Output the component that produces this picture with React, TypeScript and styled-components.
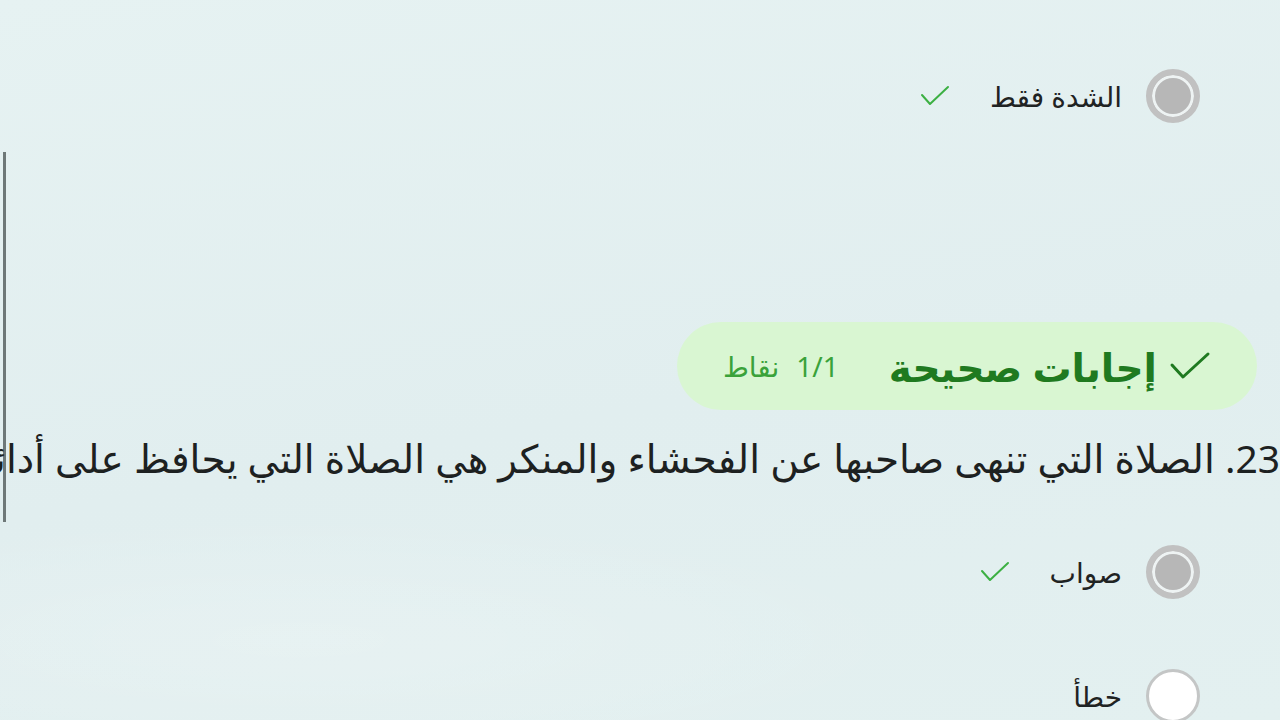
import React from 'react';
import styled, { createGlobalStyle } from 'styled-components';

const GlobalStyle = createGlobalStyle`
  html, body {
    margin: 0;
    padding: 0;
    background: #e2eff0;
  }
  body {
    font-family: "Noto Sans", "DejaVu Sans", sans-serif;
    color: #1f2323;
  }
`;

const Page = styled.div`
  width: 1280px;
  height: 720px;
  overflow: hidden;
  direction: rtl;
  background:
    radial-gradient(ellipse 900px 180px at 300px 640px, rgba(255, 255, 255, 0.18), transparent 70%),
    linear-gradient(170deg, #e6f2f2 0%, #e1eeef 55%, #e3f0f0 100%);
  display: flex;
  flex-direction: column;
`;

const OptionRow = styled.div<{ $top: number }>`
  flex: none;
  display: flex;
  align-items: center;
  gap: 24px;
  height: 56px;
  margin-top: ${(p) => p.$top}px;
  padding-right: 80px;
`;

const Radio = styled.span<{ $checked?: boolean }>`
  box-sizing: border-box;
  width: 54px;
  height: 54px;
  border-radius: 50%;
  flex: none;
  border: ${(p) => (p.$checked ? '6px solid #c1c1c1' : '3px solid #c4c6c6')};
  background: ${(p) => (p.$checked ? '#b7b7b7' : '#ffffff')};
  box-shadow: ${(p) => (p.$checked ? 'inset 0 0 0 3px #eef3f3' : 'none')};
`;

const OptionLabel = styled.span`
  font-size: 28px;
  line-height: 1;
  color: #1f2323;
`;

const SmallCheck = styled.svg`
  width: 30px;
  height: 22px;
  margin-right: 16px;
  flex: none;
`;

const QuestionBlock = styled.div`
  flex: none;
  margin-top: 28px;
  margin-left: 3px;
  border-left: 3px solid #6e7878;
  height: 370px;
  display: flex;
  flex-direction: column;
`;

const Pill = styled.div`
  align-self: flex-start;
  margin-top: 170px;
  margin-right: 23px;
  width: 580px;
  height: 88px;
  box-sizing: border-box;
  border-radius: 44px;
  background: #d9f6d2;
  display: flex;
  align-items: center;
  padding-right: 46px;
`;

const BigCheck = styled.svg`
  width: 42px;
  height: 32px;
  flex: none;
  margin-left: 12px;
`;

const ResultTitle = styled.span`
  font-size: 39px;
  font-weight: 700;
  color: #1f7a20;
  line-height: 1;
`;

const Score = styled.span`
  margin-right: 50px;
  font-size: 28px;
  color: #3aa23a;
  line-height: 1;
  display: flex;
  gap: 17px;
  align-items: center;
`;

const Question = styled.div`
  margin-top: 22px;
  font-size: 39px;
  line-height: 52px;
  white-space: nowrap;
  color: #1d2121;
`;

const Check = ({ big }: { big?: boolean }) =>
  big ? (
    <BigCheck viewBox="0 0 42 32">
      <path d="M3 15 L14 27 L39 4" fill="none" stroke="#1f7a20" strokeWidth="3" strokeLinecap="round" strokeLinejoin="round" />
    </BigCheck>
  ) : (
    <SmallCheck viewBox="0 0 30 22">
      <path d="M2 10 L10 19 L28 2" fill="none" stroke="#3cb043" strokeWidth="2" strokeLinecap="round" strokeLinejoin="round" />
    </SmallCheck>
  );

const App = (): React.ReactElement => {
  return (
    <>
      <GlobalStyle />
      <Page>
        <OptionRow $top={68}>
          <Radio $checked />
          <OptionLabel>الشدة فقط</OptionLabel>
          <Check />
        </OptionRow>
        <QuestionBlock>
          <Pill>
            <Check big />
            <ResultTitle>إجابات صحيحة</ResultTitle>
            <Score>
              <span>1/1</span>
              <span>نقاط</span>
            </Score>
          </Pill>
          <Question>23. الصلاة التي تنهى صاحبها عن الفحشاء والمنكر هي الصلاة التي يحافظ على أدائها</Question>
        </QuestionBlock>
        <OptionRow $top={22}>
          <Radio $checked />
          <OptionLabel>صواب</OptionLabel>
          <Check />
        </OptionRow>
        <OptionRow $top={68}>
          <Radio />
          <OptionLabel>خطأ</OptionLabel>
        </OptionRow>
      </Page>
    </>
  );
};

export default App;
